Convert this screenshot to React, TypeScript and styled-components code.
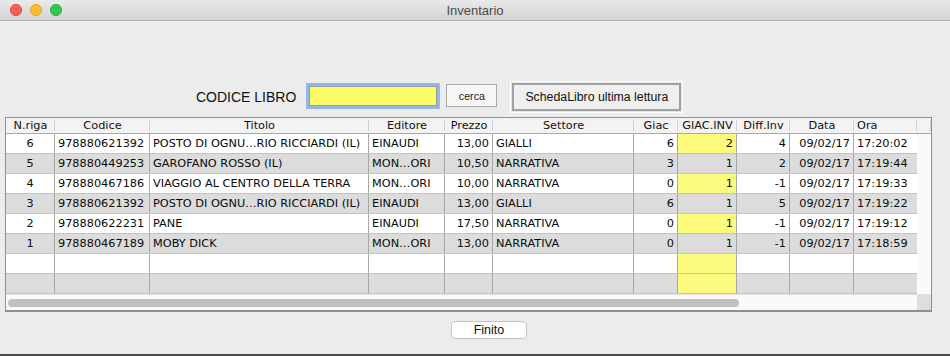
import React from "react";
import styled, { createGlobalStyle } from "styled-components";

const GlobalStyle = createGlobalStyle`
  html, body { margin: 0; padding: 0; background: #ececec; }
  body { font-family: "Liberation Sans", Arial, sans-serif; color: #1a1a1a; }
  * { box-sizing: border-box; }
`;

const COLS = [49, 95, 219, 76, 48, 141, 44, 59, 53, 64, 63];
const TEMPLATE = COLS.map((c) => `${c}px`).join(" ");
const GRID_FONT = `"DejaVu Sans", Verdana, sans-serif`;

const Window = styled.div`
  width: 950px;
  height: 356px;
  background: #ececec;
  display: flex;
  flex-direction: column;
  border-bottom: 2px solid #4a4a4a;
  overflow: hidden;
`;

const TitleBar = styled.div`
  height: 21px;
  flex: none;
  display: grid;
  grid-template-columns: 1fr auto 1fr;
  align-items: center;
  background: linear-gradient(#e9e9e9, #d3d3d3);
  border-bottom: 1px solid #b3b3b3;
`;

const Lights = styled.div`
  display: flex;
  gap: 8px;
  padding-left: 10px;
`;

const Light = styled.span<{ $c: string; $b: string }>`
  width: 12px;
  height: 12px;
  border-radius: 50%;
  background: ${(p) => p.$c};
  border: 1px solid ${(p) => p.$b};
`;

const Title = styled.div`
  font-size: 13px;
  color: #4b4b4b;
`;

const Toolbar = styled.div`
  flex: none;
  height: 34px;
  margin-top: 59px;
  margin-bottom: 3px;
  padding-left: 196px;
  display: flex;
  align-items: center;
`;

const Label = styled.span`
  font-size: 14px;
  color: #111;
  margin-bottom: 1px;
`;

const CodeInput = styled.input`
  width: 128px;
  height: 20px;
  margin: 0 0 3px 13px;
  padding: 0 3px;
  border: 1px solid #9a9a9a;
  background: #fbfb66;
  box-shadow: 0 0 0 3px rgba(118, 164, 240, 0.75);
  outline: none;
  font-family: inherit;
  font-size: 13px;
`;

const SmallButton = styled.button`
  width: 51px;
  height: 23px;
  margin: 0 0 3px 9px;
  padding: 0;
  border: 1px solid #a9a9a9;
  background: #f7f7f7;
  font-family: inherit;
  font-size: 10.7px;
  color: #1a1a1a;
`;

const FramedButton = styled.button`
  width: 169px;
  height: 28px;
  margin-left: 15px;
  padding: 0;
  border: 2px solid #a1a1a1;
  background: #efefef;
  box-shadow: 0 0 0 1px #e4e4e4, 0 0 0 2px #fdfdfd;
  font-family: inherit;
  font-size: 12.3px;
  color: #111;
`;

const Frame = styled.div`
  flex: none;
  margin-left: 5px;
  width: 927px;
  border: 1px solid #8f8f8f;
  border-right-width: 2px;
  border-bottom-width: 2px;
  display: grid;
  grid-template-columns: 911px 14px;
  grid-template-rows: 16px 160px 16px;
  background: #fafafa;
`;

const HeaderRow = styled.div`
  grid-column: 1 / 3;
  display: grid;
  grid-template-columns: ${TEMPLATE} 14px;
  background: #f3f3f3;
  border-bottom: 1px solid #a9a9a9;
`;

const HeaderCell = styled.div<{ $align?: string }>`
  position: relative;
  font-family: ${GRID_FONT};
  font-size: 11.3px;
  line-height: 15px;
  color: #111;
  text-align: ${(p) => p.$align || "center"};
  padding: 0 3px;
  white-space: nowrap;
  overflow: hidden;
  &::after {
    content: "";
    position: absolute;
    right: 0;
    top: 2px;
    bottom: 2px;
    width: 1px;
    background: #d2d2d2;
  }
`;

const Body = styled.div`
  display: flex;
  flex-direction: column;
`;

const Row = styled.div<{ $alt: boolean }>`
  display: grid;
  grid-template-columns: ${TEMPLATE};
  height: 20px;
  background: ${(p) => (p.$alt ? "#dcdcdc" : "#ffffff")};
  border-bottom: 1px solid #c2c2c2;
`;

const Cell = styled.div<{ $align: string; $yellow?: boolean; $last?: boolean }>`
  font-family: ${GRID_FONT};
  font-size: 11.3px;
  line-height: 19px;
  padding: 0 3px 0 3px;
  text-align: ${(p) => p.$align};
  white-space: nowrap;
  overflow: hidden;
  color: #0a0a0a;
  background: ${(p) => (p.$yellow ? "#fbfb7e" : "transparent")};
  border-right: ${(p) => (p.$last ? "none" : "1px solid #a7a7a7")};
`;

const VTrack = styled.div`
  background: #fafafa;
`;

const HTrack = styled.div`
  background: #fafafa;
  border-top: 1px solid #e4e4e4;
  padding: 4px 0 0 2px;
`;

const Thumb = styled.div`
  width: 731px;
  height: 8px;
  border-radius: 4px;
  background: #c1c1c1;
`;

const Corner = styled.div`
  background: #dedede;
`;

const Footer = styled.div`
  padding: 8px 0 0 451px;
`;

const DoneButton = styled.button`
  width: 76px;
  height: 18px;
  padding: 0;
  border: 1px solid #c3c3c3;
  border-radius: 4px;
  background: #ffffff;
  font-family: inherit;
  font-size: 12.5px;
  line-height: 16px;
  color: #111;
`;

const HEADERS: [string, string?][] = [
  ["N.riga"],
  ["Codice"],
  ["Titolo"],
  ["Editore"],
  ["Prezzo"],
  ["Settore"],
  ["Giac"],
  ["GIAC.INV"],
  ["Diff.Inv"],
  ["Data"],
  ["Ora", "left"],
];

const ALIGN = ["center", "left", "left", "left", "right", "left", "right", "right", "right", "right", "left"];

type RowData = { cells: string[]; yellow: boolean };

const ROWS: RowData[] = [
  { cells: ["6", "978880621392", "POSTO DI OGNU…RIO RICCIARDI (IL)", "EINAUDI", "13,00", "GIALLI", "6", "2", "4", "09/02/17", "17:20:02"], yellow: true },
  { cells: ["5", "978880449253", "GAROFANO ROSSO (IL)", "MON…ORI", "10,50", "NARRATIVA", "3", "1", "2", "09/02/17", "17:19:44"], yellow: false },
  { cells: ["4", "978880467186", "VIAGGIO AL CENTRO DELLA TERRA", "MON…ORI", "10,00", "NARRATIVA", "0", "1", "-1", "09/02/17", "17:19:33"], yellow: true },
  { cells: ["3", "978880621392", "POSTO DI OGNU…RIO RICCIARDI (IL)", "EINAUDI", "13,00", "GIALLI", "6", "1", "5", "09/02/17", "17:19:22"], yellow: false },
  { cells: ["2", "978880622231", "PANE", "EINAUDI", "17,50", "NARRATIVA", "0", "1", "-1", "09/02/17", "17:19:12"], yellow: true },
  { cells: ["1", "978880467189", "MOBY DICK", "MON…ORI", "13,00", "NARRATIVA", "0", "1", "-1", "09/02/17", "17:18:59"], yellow: false },
  { cells: Array(11).fill(""), yellow: true },
  { cells: Array(11).fill(""), yellow: true },
];

export default function App() {
  return (
    <>
      <GlobalStyle />
      <Window>
        <TitleBar>
          <Lights>
            <Light $c="#fc5f57" $b="#e0443e" />
            <Light $c="#fdbc2e" $b="#dea123" />
            <Light $c="#34c84a" $b="#27aa35" />
          </Lights>
          <Title>Inventario</Title>
          <div />
        </TitleBar>
        <Toolbar>
          <Label>CODICE LIBRO</Label>
          <CodeInput defaultValue="" />
          <SmallButton>cerca</SmallButton>
          <FramedButton>SchedaLibro ultima lettura</FramedButton>
        </Toolbar>
        <Frame>
          <HeaderRow>
            {HEADERS.map(([h, a]) => (
              <HeaderCell key={h} $align={a}>
                {h}
              </HeaderCell>
            ))}
            <HeaderCell />
          </HeaderRow>
          <Body>
            {ROWS.map((r, i) => (
              <Row key={i} $alt={i % 2 === 1}>
                {r.cells.map((c, j) => (
                  <Cell key={j} $align={ALIGN[j]} $yellow={j === 7 && r.yellow} $last={j === 10}>
                    {c}
                  </Cell>
                ))}
              </Row>
            ))}
          </Body>
          <VTrack />
          <HTrack>
            <Thumb />
          </HTrack>
          <Corner />
        </Frame>
        <Footer>
          <DoneButton>Finito</DoneButton>
        </Footer>
      </Window>
    </>
  );
}
